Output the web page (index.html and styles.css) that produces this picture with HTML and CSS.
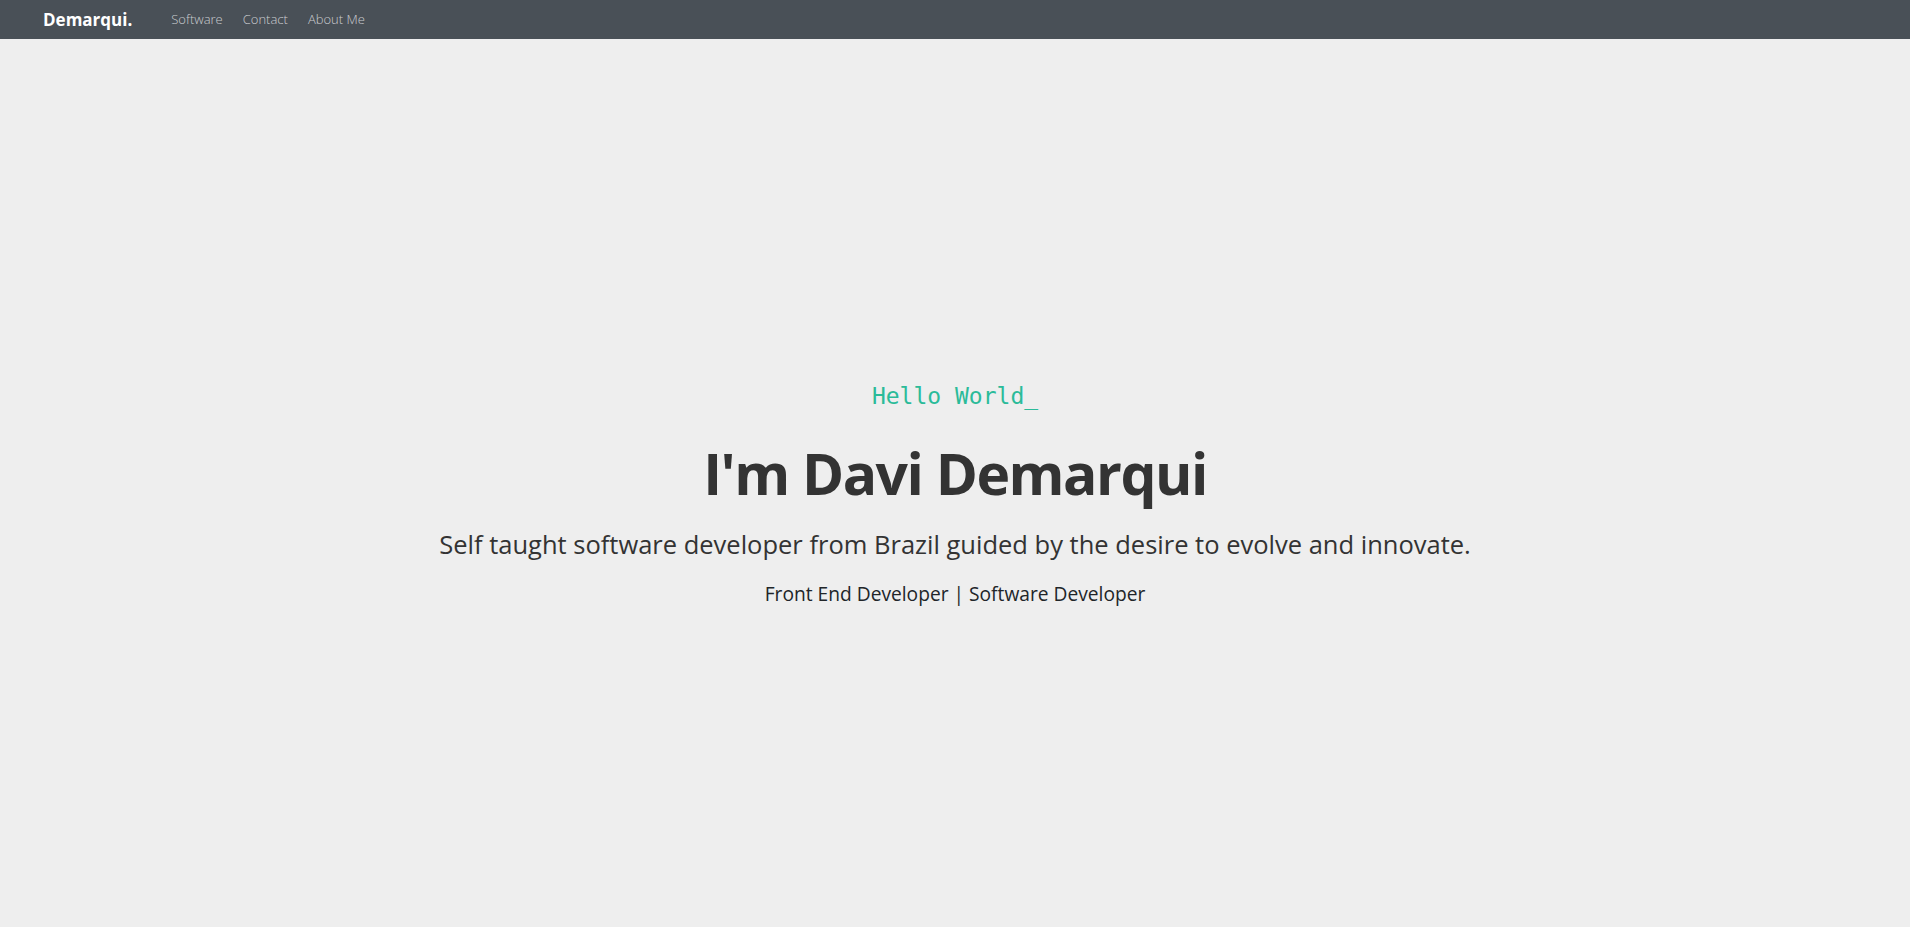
FILE: index.html
```html
<!DOCTYPE html>
<html lang="en">
<head>
<meta charset="utf-8">
<title>Demarqui.</title>
<link rel="stylesheet" href="styles.css">
</head>
<body>
<header class="navbar">
  <a class="brand" href="#">Demarqui.</a>
  <nav class="nav-links">
    <a href="#software">Software</a>
    <a href="#contact">Contact</a>
    <a href="#about">About Me</a>
  </nav>
</header>
<main>
  <section class="hero">
    <p class="hello">Hello World_</p>
    <h1 class="title">I'm Davi Demarqui</h1>
    <p class="lead">Self taught software developer from Brazil guided by the desire to evolve and innovate.</p>
    <p class="roles">Front End Developer | Software Developer</p>
  </section>
</main>
</body>
</html>
```
FILE: styles.css
```css
html, body {
  margin: 0;
  padding: 0;
}
::-webkit-scrollbar {
  width: 7px;
}
::-webkit-scrollbar-track {
  background: #f1f1f1;
}
::-webkit-scrollbar-thumb {
  background: #c1c1c1;
}
body {
  background: #eeeeee;
  font-family: "Open Sans", "Noto Sans", sans-serif;
  color: #333333;
}
.navbar {
  height: 39px;
  background: #495057;
  display: flex;
  align-items: center;
  padding: 0 0 0 43px;
  box-sizing: border-box;
}
.brand {
  color: #ffffff;
  font-weight: 700;
  font-size: 17px;
  text-decoration: none;
  margin-right: 39px;
}
.nav-links {
  display: flex;
  gap: 20px;
  padding-bottom: 2px;
}
.nav-links a {
  color: #c9ccd0;
  font-size: 13px;
  font-weight: 300;
  text-decoration: none;
}
.hero {
  height: 888px;
  display: flex;
  flex-direction: column;
  align-items: center;
  justify-content: center;
  text-align: center;
  box-sizing: border-box;
  padding-top: 24px;
}
.hello {
  margin: 0;
  font-family: "DejaVu Sans Mono", "Liberation Mono", monospace;
  font-size: 23px;
  line-height: 28px;
  color: #2bbb99;
}
.title {
  margin: 28px 0 0;
  font-size: 57px;
  line-height: 70px;
  font-weight: 700;
  letter-spacing: -1.5px;
  color: #333333;
}
.lead {
  margin: 20px 0 0;
  font-size: 25.5px;
  line-height: 32px;
  color: #333333;
}
.roles {
  margin: 20px 0 0;
  font-size: 19.2px;
  line-height: 28px;
  color: #212529;
}
```
